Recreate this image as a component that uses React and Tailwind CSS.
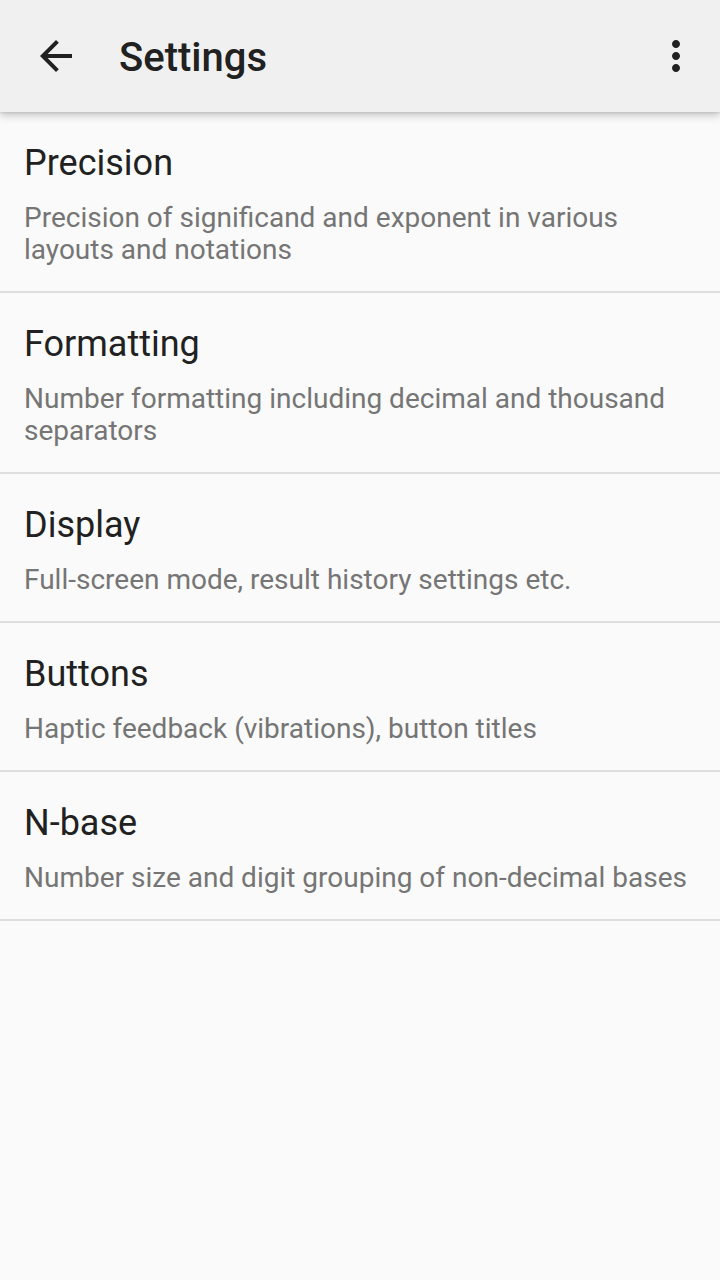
const items = [
  {
    title: "Precision",
    summary: "Precision of significand and exponent in various layouts and notations",
  },
  {
    title: "Formatting",
    summary: "Number formatting including decimal and thousand separators",
  },
  { title: "Display", summary: "Full-screen mode, result history settings etc." },
  { title: "Buttons", summary: "Haptic feedback (vibrations), button titles" },
  { title: "N-base", summary: "Number size and digit grouping of non-decimal bases" },
];

export default function App() {
  return (
    <div
      className="min-h-[1280px] w-[720px] bg-[#fafafa]"
      style={{ fontFamily: "Roboto, 'Noto Sans', sans-serif" }}
    >
      {/* App bar */}
      <header className="relative z-10 flex h-[112px] items-center bg-[#f0f0f0] shadow-[0_4px_8px_rgba(0,0,0,0.18),0_1px_3px_rgba(0,0,0,0.12)]">
        <button className="ml-[32px] flex h-[48px] w-[48px] items-center justify-center text-[#212121]">
          <svg viewBox="0 0 24 24" className="h-[48px] w-[48px]" fill="currentColor">
            <path d="M20 11H7.83l5.59-5.59L12 4l-8 8 8 8 1.41-1.41L7.83 13H20v-2z" />
          </svg>
        </button>
        <h1 className="ml-[39px] mt-[4px] flex-1 text-[40px] font-medium leading-none text-[#212121]">
          Settings
        </h1>
        <button className="mr-[20px] flex h-[48px] w-[48px] items-center justify-center text-[#212121]">
          <svg viewBox="0 0 24 24" className="h-[48px] w-[48px]" fill="currentColor">
            <path d="M12 8c1.1 0 2-.9 2-2s-.9-2-2-2-2 .9-2 2 .9 2 2 2zm0 2c-1.1 0-2 .9-2 2s.9 2 2 2 2-.9 2-2-.9-2-2-2zm0 6c-1.1 0-2 .9-2 2s.9 2 2 2 2-.9 2-2-.9-2-2-2z" />
          </svg>
        </button>
      </header>

      {/* Preference list */}
      <ul>
        {items.map((item) => (
          <li
            key={item.title}
            className="border-b-2 border-[#dedede] pl-[24px] pr-[16px] pb-[25px] pt-[27px]"
          >
            <div className="text-[36px] leading-[48px] text-[#212121]">{item.title}</div>
            <div className="mt-[15px] text-[28px] leading-[32px] text-[#757575]">
              {item.summary}
            </div>
          </li>
        ))}
      </ul>
    </div>
  );
}
